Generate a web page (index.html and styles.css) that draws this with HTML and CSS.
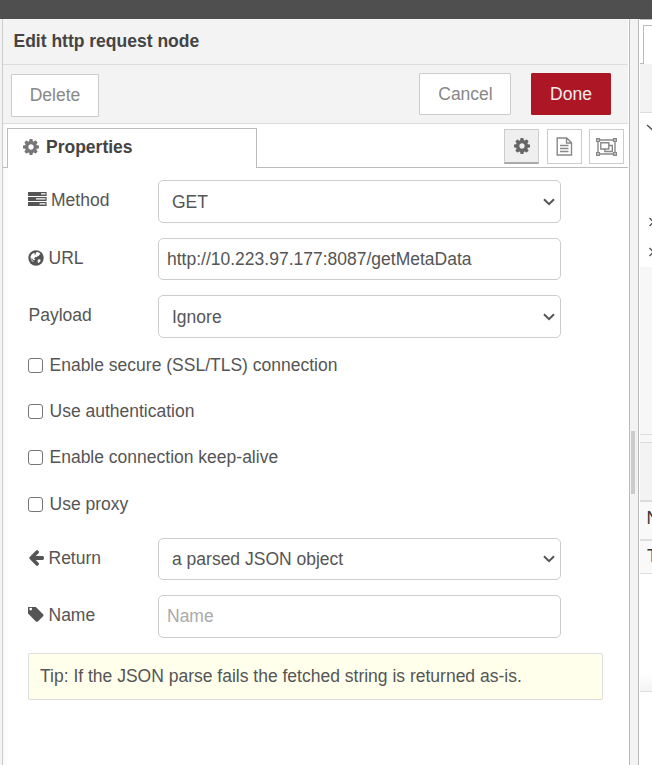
FILE: index.html
```html
<!DOCTYPE html>
<html lang="en">
<head>
<meta charset="utf-8">
<title>Edit http request node</title>
<link rel="stylesheet" href="styles.css">
</head>
<body>
<svg width="0" height="0" class="defs">
  <symbol id="cog" viewBox="128 128 1536 1536"><path fill="currentColor" d="M1152 896q0-106-75-181t-181-75-181 75-75 181 75 181 181 75 181-75 75-181zm512-109v222q0 12-8 23t-20 13l-185 28q-19 54-39 91 35 50 107 138 10 12 10 25t-9 23q-27 37-99 108t-94 71q-12 0-26-9l-138-108q-44 23-91 38-16 136-29 186-7 28-36 28h-222q-14 0-24.5-8.5t-11.5-21.5l-28-184q-49-16-90-37l-141 107q-10 9-25 9-14 0-25-11-126-114-165-168-7-10-7-23 0-12 8-23 15-21 51-66.5t54-70.5q-27-50-41-99l-183-27q-13-2-21-12.5t-8-23.5v-222q0-12 8-23t19-13l186-28q14-46 39-92-40-57-107-138-10-12-10-24 0-10 9-23 26-36 98.5-107.5t94.5-71.5q13 0 26 10l138 107q44-23 91-38 16-136 29-186 7-28 36-28h222q14 0 24.5 8.5t11.5 21.5l28 184q49 16 90 37l142-107q9-9 24-9 13 0 25 10 129 119 165 170 7 8 7 22 0 12-8 23-15 21-51 66.5t-54 70.5q26 50 41 98l183 28q13 2 21 12.5t8 23.5z"/></symbol>
</svg>
<div class="topbar"></div>
<div class="workspace">
  <div class="gutter"></div>
  <main class="tray">
    <header class="title">Edit http request node</header>
    <div class="toolbar">
      <button class="btn delete">Delete</button>
      <button class="btn cancel">Cancel</button>
      <button class="btn done">Done</button>
    </div>
    <div class="tabs">
      <div class="tab"><svg class="cog"><use href="#cog"/></svg><span>Properties</span></div>
      <div class="tab-buttons">
        <button class="icon-btn active"><svg class="cog"><use href="#cog"/></svg></button>
        <button class="icon-btn"><svg width="17" height="19" viewBox="0 0 17 19" fill="none" stroke="currentColor" stroke-width="1.4"><path d="M1.2 1h9.600l4.700 4.700V18H1.200zM10.500 1v5h5M4 8.500h8.500M4 11.500h8.500M4 14.500h8.500"/></svg></button>
        <button class="icon-btn"><svg width="21" height="18" viewBox="0 0 21 18" fill="none" stroke="currentColor" stroke-width="1.4"><path d="M3.500 2h14M3.500 16h14M2 3.500v11M19 3.500v11M4.800 4.800h8v6.200h-8zM12.800 7.500h3.500v6H8.800V11"/><path fill="#fff" d="M.7.7h2.700v2.700H.7zM17.600.7h2.700v2.700h-2.700zM.7 14.600h2.700v2.700H.7zM17.600 14.600h2.700v2.700h-2.700z"/></svg></button>
      </div>
    </div>
    <form class="form">
      <div class="row method">
        <label><svg width="19" height="15" viewBox="0 0 19 15"><path fill="currentColor" d="M0 0h18.600v4H0zM0 5h18.600v4H0zM0 10h18.600v4H0z"/><path fill="#fff" d="M13 1.300h4.500v1.200H13zM8 6.300h9.500v1.200H8zM11.500 11.300h6v1.200h-6z"/></svg><span>Method</span></label>
        <div class="field select"><span>GET</span><svg class="chevron" viewBox="0 0 12 8"><path d="M1 1.200l5 5 5-5"/></svg></div>
      </div>
      <div class="row url">
        <label><svg width="16" height="16" viewBox="0 0 16 16"><circle cx="8" cy="8" r="7.700" fill="currentColor"/><path fill="#fff" d="M8.300 2.300l1.500-.3 2.200 1.200.3 1.200-1.100.3-.1 1-1.400.4-.8 1.200-1.200-.5-.9.900-1.100.8 1.300.6-.3 1.200-1.700-.6-1-1.500-.8.200.5 1.500 1.600 1 .2 1.200-1.700-1.200-1.100-2.200-.2-2 1.200-2.400 2-1.400 1.200.4-.6 1 .8.500zM10.300 9.500l1.500-.2.900 1-.9 1.600-2 1.300.2-1.300-.5-1.200z"/></svg><span>URL</span></label>
        <div class="field">http://10.223.97.177:8087/getMetaData</div>
      </div>
      <div class="row payload">
        <label>Payload</label>
        <div class="field select"><span>Ignore</span><svg class="chevron" viewBox="0 0 12 8"><path d="M1 1.200l5 5 5-5"/></svg></div>
      </div>
      <div class="checks">
        <label><i class="box"></i>Enable secure (SSL/TLS) connection</label>
        <label><i class="box"></i>Use authentication</label>
        <label><i class="box"></i>Enable connection keep-alive</label>
        <label><i class="box"></i>Use proxy</label>
      </div>
      <div class="row return">
        <label><svg class="arrow" viewBox="290 180 1510 1560" preserveAspectRatio="none"><path fill="currentColor" d="M1792 896v128q0 53-32.500 90.500t-84.500 37.500h-704l293 294q38 36 38 90t-38 90l-75 76q-37 37-90 37-52 0-91-37l-651-652q-37-37-37-90 0-52 37-91l651-650q38-38 91-38 52 0 90 38l75 74q38 38 38 91t-38 91l-293 293h704q52 0 84.500 37.500t32.500 90.500z"/></svg><span>Return</span></label>
        <div class="field select"><span>a parsed JSON object</span><svg class="chevron" viewBox="0 0 12 8"><path d="M1 1.200l5 5 5-5"/></svg></div>
      </div>
      <div class="row name">
        <label><svg class="tag" viewBox="192 256 1500 1400" preserveAspectRatio="none"><path fill="currentColor" d="M576 448q0-53-37.500-90.500t-90.500-37.500-90.500 37.500-37.500 90.500 37.500 90.500 90.500 37.500 90.500-37.500 37.500-90.500zm1067 576q0 53-37 90l-491 492q-39 37-91 37-53 0-90-37l-715-716q-38-37-64.500-101t-26.500-117v-416q0-52 38-90t90-38h416q53 0 117 26.500t102 64.500l715 714q37 39 37 91z"/></svg><span>Name</span></label>
        <div class="field placeholder">Name</div>
      </div>
      <div class="tip">Tip: If the JSON parse fails the fetched string is returned as-is.</div>
    </form>
  </main>
  <div class="splitter"><div class="grip"></div></div>
  <aside class="sidebar">
    <div class="side-tabs"><div class="side-tab"></div></div>
    <div class="side-tools"></div>
    <div class="tree">
      <svg width="12" height="154" viewBox="0 0 12 154" fill="none" stroke="#555" stroke-width="1.4"><path d="M7 12l5 4.500 5-4.500M9.500 105l4 4-4 4M9.500 135l4 4-4 4"/></svg>
    </div>
    <div class="side-gap"></div>
    <div class="side-line"></div>
    <div class="side-band"></div>
    <div class="side-cell">N</div>
    <div class="side-cell type">T</div>
    <div class="side-info"></div>
    <div class="side-rest"></div>
  </aside>
</div>
</body>
</html>
```
FILE: styles.css
```css
* { box-sizing: border-box; }
body { margin: 0; width: 652px; height: 765px; overflow: hidden; background: #fff; color: #555; font: 17.5px/24px "Liberation Sans", Arial, sans-serif; }
button { font: inherit; }
.defs { display: block; height: 0; }
.topbar { height: 19px; background: #4f4f4f; }
.workspace { display: flex; height: 746px; }
.gutter { width: 3px; background: #f3f3f3; border-right: 1px solid #ccc; }
.tray { width: 626px; padding-right: 1px; background: linear-gradient(90deg, #f8f8f8, #fff 6px); }
.title { height: 46px; padding: 10px 10.5px; background: #f3f3f3; border-bottom: 1px solid #ddd; color: #444; font-weight: bold; }
.toolbar { display: flex; height: 59px; padding: 8px 17px 0 8px; background: #f3f3f3; border-bottom: 1px solid #ddd; }
.btn { height: 42px; padding: 0; background: #fff; border: 1px solid #ccc; color: #888; border-radius: 1px; }
.delete { width: 88px; height: 43px; margin-top: 1px; padding-bottom: 2px; }
.cancel { width: 92px; margin-left: auto; margin-right: 20px; padding-left: 1px; }
.done { width: 80px; background: #ad1625; border-color: #ad1625; color: #eee; }
.tabs { display: flex; justify-content: space-between; height: 44px; padding: 4px 4px 0 4px; background: linear-gradient(#bbb, #bbb) bottom / 100% 1px no-repeat; }
.tab { display: flex; width: 250px; height: 40px; padding: 6px 0 0 15px; gap: 7px; background: #fff; border: 1px solid #bbb; border-bottom: 0; color: #444; font-weight: bold; }
.cog { width: 16px; height: 16px; color: #666; }
.tab .cog { color: #777; margin-top: 4px; }
.tab-buttons { display: grid; grid-template-columns: 35px 35px 35px; column-gap: 8px; padding-top: 1px; margin-right: -1px; }
.tab-buttons .icon-btn:last-child { margin-left: -1px; }
.icon-btn { display: flex; align-items: center; justify-content: center; width: 35px; height: 35px; padding: 0; background: #fff; border: 1px solid #ccc; color: #888; }
.icon-btn.active { background: #efefef; border-bottom: 2px solid #aaa; }
.form { padding: 12px 25px 0 25px; }
.row { display: flex; height: 43px; }
.row label { display: flex; width: 130px; padding-top: 8px; gap: 4.500px; }
.method label { gap: 4px; }
.payload label { padding-left: .5px; }
.row label svg { margin-top: 4px; }
.arrow { width: 15px; height: 16px; margin-left: 1px; }
.tag { width: 16px; height: 15px; }
.field { display: flex; align-items: center; justify-content: space-between; width: 403px; padding: 0 5px 0 8px; background: #fff; border: 1px solid #ccc; border-radius: 5px; }
.select { padding-left: 13px; }
.chevron { width: 12px; height: 8px; fill: none; stroke: #555; stroke-width: 2; }
.placeholder { color: #aaa; padding-bottom: 2px; }
.url { height: 42px; margin-top: 15px; }
.payload { margin-top: 15px; }
.checks { display: grid; grid-template-rows: 46px 46px 47px 46px; margin-top: 15px; }
.checks label { display: flex; gap: 6.5px; }
.box { width: 15px; height: 15px; margin-top: 5px; border: 1px solid #767676; border-radius: 3px; background: #fff; }
.return { height: 42px; }
.name { margin-top: 15px; }
.tip { width: 575px; height: 47px; margin-top: 15px; padding: 10px 11px; background: #ffffec; border: 1px solid #ddd; border-radius: 2px; }
.splitter { display: flex; align-items: center; width: 10px; background: #f3f3f3; border: 1px solid #bbb; border-width: 0 1px; }
.grip { width: 4px; height: 63px; margin: 140px 0 0 1px; background: #ccc; }
.sidebar { width: 13px; padding-left: 1px; background: #fff; overflow: hidden; }
.side-tabs { height: 45px; padding: 5px 0 1px 3px; background: linear-gradient(#bbb, #bbb) left bottom / 3px 1px no-repeat; border-top: 1px solid #bbb; }
.side-tab { height: 39px; border: 1px solid #bbb; border-width: 1px 0 0 1px; }
.side-tools { height: 49px; background: #f3f3f3; border-bottom: 1px solid #ddd; }
.tree { height: 154px; }
.tree svg { display: block; }
.side-gap { height: 168px; background: #f7f7f7; border-bottom: 1px solid #ddd; }
.side-line { height: 8px; background: #f7f7f7; border-bottom: 1px solid #ddd; }
.side-band { height: 59px; background: #f3f3f3; border-bottom: 2px solid #ddd; }
.side-cell { height: 39px; padding: 4px 0 0 6.5px; background: #f9f9f9; border-bottom: 2px solid #ddd; color: #333; }
.type { height: 33px; padding: 3px 0 0 7px; border-bottom-width: 1px; }
.side-info { height: 118px; background: linear-gradient(#fff 85%, #f3f3f3); border-bottom: 1px solid #ddd; }
.side-rest { height: 74px; }
```
